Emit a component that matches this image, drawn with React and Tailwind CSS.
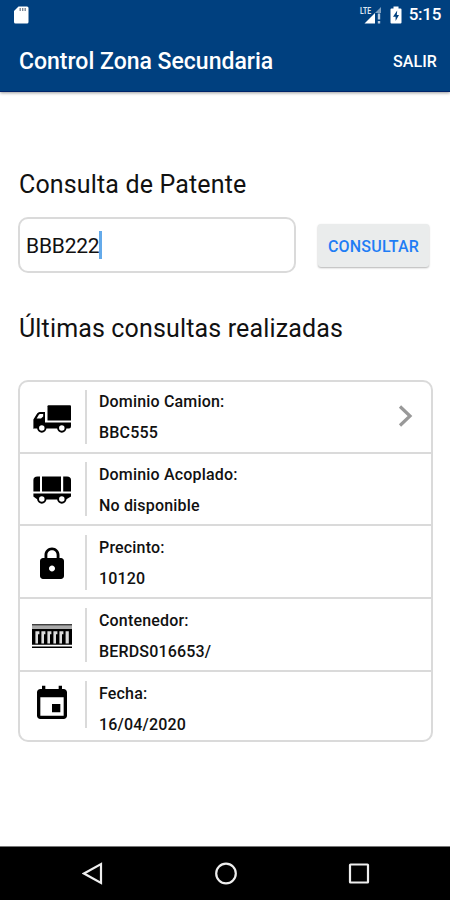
const LockPath =
  "M18 8h-1V6c0-2.76-2.24-5-5-5S7 3.24 7 6v2H6c-1.1 0-2 .9-2 2v10c0 1.1.9 2 2 2h12c1.1 0 2-.9 2-2V10c0-1.1-.9-2-2-2zm-6 9c-1.1 0-2-.9-2-2s.9-2 2-2 2 .9 2 2-.9 2-2 2zm3.1-9H8.9V6c0-1.71 1.39-3.1 3.1-3.1 1.71 0 3.1 1.39 3.1 3.1v2z";
const EventPath =
  "M17 12h-5v5h5v-5zM16 1v2H8V1H6v2H5c-1.11 0-1.99.9-1.99 2L3 19c0 1.1.89 2 2 2h14c1.1 0 2-.9 2-2V5c0-1.1-.9-2-2-2h-1V1h-2zm3 18H5V8h14v11z";

function Wheels() {
  return (
    <g fill="#fff" stroke="#000" strokeWidth="1.9">
      <circle cx="8.8" cy="24" r="3.7" />
      <circle cx="28.8" cy="24" r="3.7" />
    </g>
  );
}

function Truck() {
  return (
    <svg className="mt-[22px] h-8 w-[38px]" viewBox="0 0 38 32">
      <path d="M14.5 2.2Q14.5 1.2 15.5 1.2H37Q38 1.2 38 2.2V16.6H14.5Z" />
      <path d="M.4 25V15.4L4.1 9.6Q5.2 8 6.8 8H12V18.4H38V22.3Q38 24.6 36 24.6H1Z" />
      <path d="M3.6 14.4L6 10.6Q6.4 10 7 10H10.2V12.4L8 14.4Z" fill="#fff" />
      <Wheels />
    </svg>
  );
}

function Wagon() {
  return (
    <svg className="mt-[21px] h-8 w-[38px]" viewBox="0 0 38 32">
      <path d="M7 1.4V16.6H.4V5Q.4 1.4 4.5 1.4ZM9 1.4H28V16.6H9ZM30.2 1.4H34Q38 1.4 38 5V16.6H30.2Z" />
      <path d="M.4 18.6H38V21.5L33 24.6H4.4L.4 21.5Z" />
      <Wheels />
    </svg>
  );
}

function Lock() {
  return (
    <svg className="mt-5 size-9" viewBox="0 0 24 24">
      <path d={LockPath} />
    </svg>
  );
}

function Container() {
  return (
    <svg className="mt-6 h-7 w-10" viewBox="0 0 40 28">
      <path d="M0 1.2H40V2.6H0ZM0 23.5H40V25H0Z" />
      <path d="M0 3H40V6H0Z" fill="#aaa" />
      <path d="M0 6H40V21.8H0Z" />
      <path
        d="M3.4 8.2h4v3h-1.4v9.2h-2.6ZM9.4 8.2h4v3h-1.4v9.2h-2.6ZM15.4 8.2h4v3h-1.4v9.2h-2.6ZM21.4 8.2h4v3h-1.4v9.2h-2.6ZM27.4 8.2h4v3h-1.4v9.2h-2.6ZM33.6 8.2h3.2v12.2h-3.2Z"
        fill="#dcdcdc"
      />
    </svg>
  );
}

function Calendar() {
  return (
    <svg className="mt-3 h-10 w-10" viewBox="0 0 24 24">
      <path d={EventPath} />
    </svg>
  );
}

const rows = [
  { label: "Dominio Camion:", value: "BBC555", Icon: Truck, size: "h-[72px]", bar: "mt-2 h-[54px]", text: "mt-1", chevron: true },
  { label: "Dominio Acoplado:", value: "No disponible", Icon: Wagon, size: "h-[72px]", bar: "mt-2 h-[54px]", text: "mt-[5px]" },
  { label: "Precinto:", value: "10120", Icon: Lock, size: "h-[73px]", bar: "mt-[9px] h-[55px]", text: "mt-1.5" },
  { label: "Contenedor:", value: "BERDS016653/", Icon: Container, size: "h-[73px]", bar: "mt-[9px] h-[54px]", text: "mt-1.5" },
  { label: "Fecha:", value: "16/04/2020", Icon: Calendar, size: "h-[68px]", bar: "mt-[9px] h-[47px]", text: "mt-1.5" },
];

function Row({ label, value, Icon, size, bar, text, chevron }) {
  return (
    <li className={`flex border-b-2 border-[#dadada] last:border-b-0 ${size}`}>
      <div className="flex w-[65px] shrink-0 items-start justify-center pr-[2px]">
        <Icon />
      </div>
      <div className={`w-[2px] shrink-0 bg-[#dadada] ${bar}`} />
      <div className={`ml-3 grow text-base font-medium leading-[31px] tracking-[0.17px] ${text}`}>
        <p className="h-[31px] whitespace-nowrap">{label}</p>
        <p className="h-[31px] whitespace-nowrap">{value}</p>
      </div>
      {chevron && (
        <svg className="mr-[17px] mt-[22px] h-6 w-4" viewBox="0 0 16 24" fill="none" stroke="#999" strokeWidth="3.2">
          <path d="M2 2.5L12 12L2 21.5" />
        </svg>
      )}
    </li>
  );
}

export default function App() {
  return (
    <div className="flex h-[900px] w-[450px] flex-col overflow-hidden bg-white font-[Roboto,sans-serif] text-[#111]">
      <header className="h-[92px] shrink-0 border-b border-[#00246a] bg-[#00407f] text-white shadow-[0_1px_3px_rgba(0,0,0,0.4)]">
        <div className="flex h-[29px] items-center pl-[14px] pr-[9px]">
          <svg className="h-[18px] w-[15px]" viewBox="0 0 15 18">
            <path d="M4.5 .5H13Q14.5 .5 14.5 2V16Q14.5 17.5 13 17.5H1.5Q0 17.5 0 16V5Z" fill="#fff" />
            <path d="M5.5 2h1.4v3H5.5zM8 2h1.4v3H8zM10.5 2h1.4v3h-1.4z" fill="#7b8795" />
          </svg>
          <svg className="ml-auto h-[18px] w-[23px]" viewBox="0 0 23 18">
            <text x="1" y="8" fontSize="9.5" fontWeight="700" fill="#dce6f2" textLength="11" lengthAdjust="spacingAndGlyphs">LTE</text>
            <path d="M5.5 17.5L16 7V17.5Z" fill="#fff" />
            <path d="M16 7L22 1V7Z" fill="#7f9fbf" />
            <path d="M18.8 7.5h2.4v6h-2.4zM18.8 15h2.4v2.5h-2.4z" fill="#b9cade" />
          </svg>
          <svg className="ml-2 h-[18px] w-3" viewBox="0 0 12 18">
            <path d="M3.5 .5H8.5V2.5H10.5Q11.5 2.5 11.5 3.5V16.5Q11.5 17.5 10.5 17.5H1.5Q.5 17.5 .5 16.5V3.5Q.5 2.5 1.5 2.5H3.5Z" fill="#fff" />
            <path d="M7.2 4.5L3 10.8H5.6V15L9 9H6.8Z" fill="#00407f" />
          </svg>
          <span className="ml-[7px] text-[17px] font-medium leading-none tracking-[-0.3px]">5:15</span>
        </div>
        <div className="flex h-[62px] items-center justify-between pl-[19px] pr-[13px] pt-[3px]">
          <h1 className="whitespace-nowrap pt-[2px] text-[23px] font-medium">Control Zona Secundaria</h1>
          <button className="text-base font-medium tracking-[0.1px]">SALIR</button>
        </div>
      </header>

      <main className="grow pl-[18px] pr-[17px] pt-[75px]">
        <h2 className="h-9 whitespace-nowrap pl-px text-[25px] leading-9 tracking-[0.15px]">Consulta de Patente</h2>
        <div className="mt-[14px] flex items-center">
          <div className="flex h-[56px] w-[278px] items-center rounded-[10px] border-2 border-[#dadada] pl-[6px] text-[21px] tracking-[-0.2px]">
            <span className="pt-[3px]">BBB222</span>
            <span className="h-7 w-[3px] bg-[#64aaea]" />
          </div>
          <button className="ml-[22px] h-[43px] w-[111px] rounded-[3px] bg-[#eaecec] pt-[3px] text-base font-medium tracking-[0.2px] text-[#1f7df5] shadow-[0_1px_2px_rgba(0,0,0,0.3)]">
            CONSULTAR
          </button>
        </div>
        <h2 className="mt-[38px] h-9 whitespace-nowrap pl-px text-[25px] leading-9 tracking-[0.15px]">Últimas consultas realizadas</h2>
        <ul className="mt-[33px] rounded-[10px] border-2 border-[#dadada]">
          {rows.map((row) => (
            <Row key={row.label} {...row} />
          ))}
        </ul>
      </main>

      <nav className="flex h-[54px] shrink-0 items-center border-t border-[#777] bg-black">
        <svg className="ml-[82px] size-6" viewBox="0 0 24 24" fill="none" stroke="#eee" strokeWidth="2.2">
          <path d="M2 11.5L19 2V21Z" />
        </svg>
        <svg className="ml-[108px] size-6" viewBox="0 0 24 24" fill="none" stroke="#eee" strokeWidth="2.2">
          <circle cx="12" cy="11.5" r="9.8" />
        </svg>
        <svg className="ml-[109px] size-6" viewBox="0 0 24 24" fill="none" stroke="#eee" strokeWidth="2.2">
          <rect x="3" y="2.5" width="18" height="18" rx="0.5" />
        </svg>
      </nav>
    </div>
  );
}
